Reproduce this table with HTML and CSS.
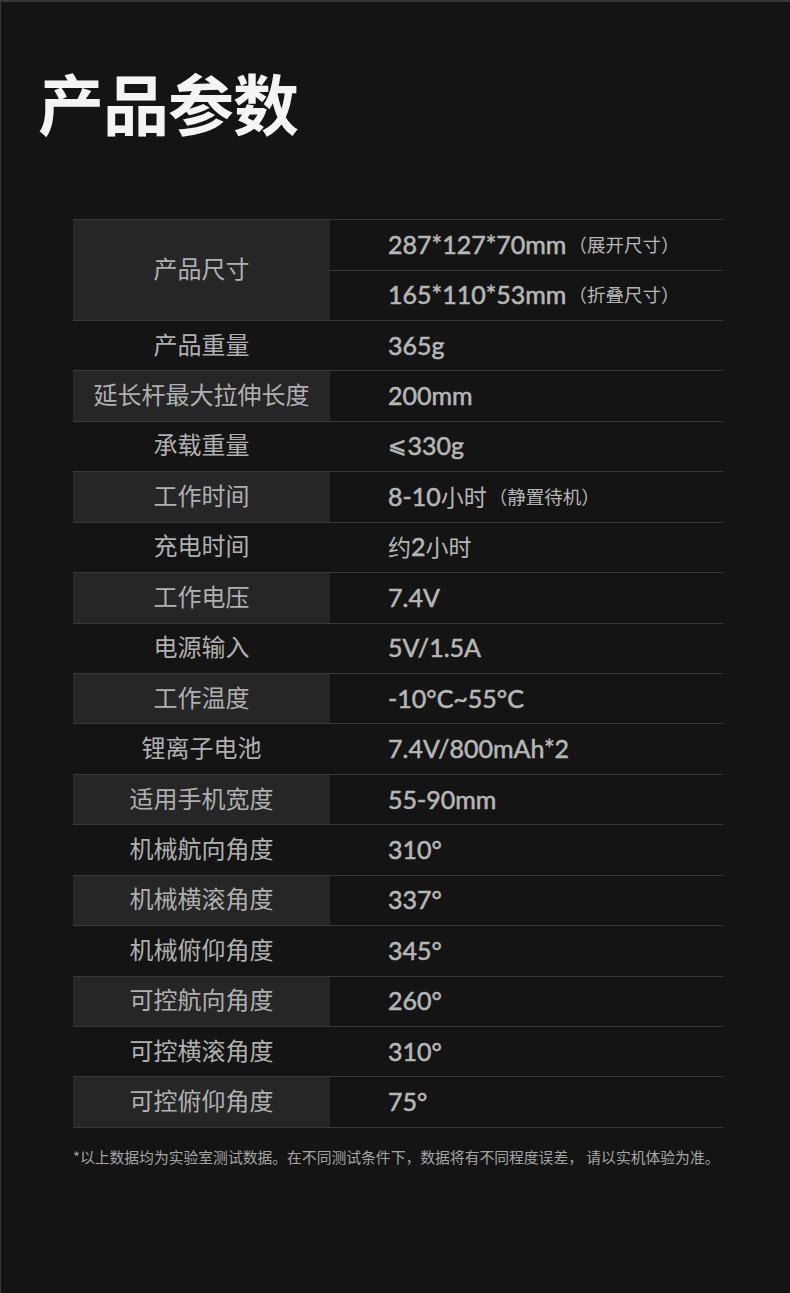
FILE: index.html
```html
<!DOCTYPE html>
<html lang="zh-CN">
<head>
<meta charset="utf-8">
<title>产品参数</title>
<link rel="stylesheet" href="styles.css">
</head>
<body>
<div class="page">
  <h1 class="title">产品参数</h1>
  <div class="specs">
    <div class="row row-double alt">
      <div class="label">产品尺寸</div>
      <div class="values">
        <div class="value">287*127*70mm<span class="note">（展开尺寸）</span></div>
        <div class="value">165*110*53mm<span class="note">（折叠尺寸）</span></div>
      </div>
    </div>
    <div class="row"><div class="label">产品重量</div><div class="value">365g</div></div>
    <div class="row alt"><div class="label">延长杆最大拉伸长度</div><div class="value">200mm</div></div>
    <div class="row"><div class="label">承载重量</div><div class="value"><span class="sym">⩽</span>330g</div></div>
    <div class="row alt"><div class="label">工作时间</div><div class="value">8-10<span class="cjk">小时</span><span class="note">（静置待机）</span></div></div>
    <div class="row"><div class="label">充电时间</div><div class="value"><span class="cjk">约</span>2<span class="cjk">小时</span></div></div>
    <div class="row alt"><div class="label">工作电压</div><div class="value">7.4V</div></div>
    <div class="row"><div class="label">电源输入</div><div class="value">5V/1.5A</div></div>
    <div class="row alt"><div class="label">工作温度</div><div class="value">-10°C~55°C</div></div>
    <div class="row"><div class="label">锂离子电池</div><div class="value">7.4V/800mAh*2</div></div>
    <div class="row alt"><div class="label">适用手机宽度</div><div class="value">55-90mm</div></div>
    <div class="row"><div class="label">机械航向角度</div><div class="value">310°</div></div>
    <div class="row alt"><div class="label">机械横滚角度</div><div class="value">337°</div></div>
    <div class="row"><div class="label">机械俯仰角度</div><div class="value">345°</div></div>
    <div class="row alt"><div class="label">可控航向角度</div><div class="value">260°</div></div>
    <div class="row"><div class="label">可控横滚角度</div><div class="value">310°</div></div>
    <div class="row alt"><div class="label">可控俯仰角度</div><div class="value">75°</div></div>
  </div>
  <p class="footnote">*以上数据均为实验室测试数据。在不同测试条件下，数据将有不同程度误差， 请以实机体验为准。</p>
</div>
</body>
</html>
```

FILE: styles.css
```css
* { box-sizing: border-box; }
html, body { margin: 0; padding: 0; }
body {
  background: #141414;
  font-family: "Noto Sans CJK SC", "Noto Sans", sans-serif;
}
.page {
  width: 790px;
  height: 1293px;
  background: #141414;
  border-top: 2px solid #363636;
  border-left: 1px solid #363636;
  padding: 0 0 0 72px;
  overflow: hidden;
}
.title {
  margin: 59px 0 0 -35px;
  font-size: 66px;
  line-height: 80px;
  font-weight: 700;
  color: #f4f4f4;
  letter-spacing: -1px;
}
.specs {
  width: 650px;
  margin-top: 78px;
  border-bottom: 1px solid #3a3a3a;
}
.row {
  display: grid;
  grid-template-columns: 257px 1fr;
  height: 50.44px;
  border-top: 1px solid #3a3a3a;
}
.row-double { height: 100.88px; }
.label {
  display: flex;
  align-items: center;
  justify-content: center;
  padding-bottom: 5px;
  font-size: 24px;
  color: #b0b0b0;
}
.row.alt .label { background: #262626; }
.values {
  display: flex;
  flex-direction: column;
}
.values .value { height: 50%; }
.values .value + .value { border-top: 1px solid #3a3a3a; }
.value {
  display: flex;
  align-items: center;
  padding-left: 58px;
  padding-bottom: 2px;
  font-family: "Lato", "Noto Sans CJK SC", sans-serif;
  font-weight: 400;
  font-size: 25px;
  color: #b6b6b6;
  -webkit-text-stroke: 0.55px #b6b6b6;
}
.cjk {
  font-family: "Noto Sans CJK SC", sans-serif;
  font-weight: 400;
  font-size: 23px;
  -webkit-text-stroke: 0;
}
.sym {
  font-family: "DejaVu Sans", sans-serif;
  font-size: 22px;
  margin-right: 1px;
}
.note {
  font-family: "Noto Sans CJK SC", sans-serif;
  font-weight: 400;
  font-size: 18.5px;
  margin-left: 2px;
  -webkit-text-stroke: 0;
}
.footnote {
  margin: 19px 0 0 0;
  font-size: 14.8px;
  line-height: 20px;
  color: #a4a4a4;
  white-space: nowrap;
}
```
